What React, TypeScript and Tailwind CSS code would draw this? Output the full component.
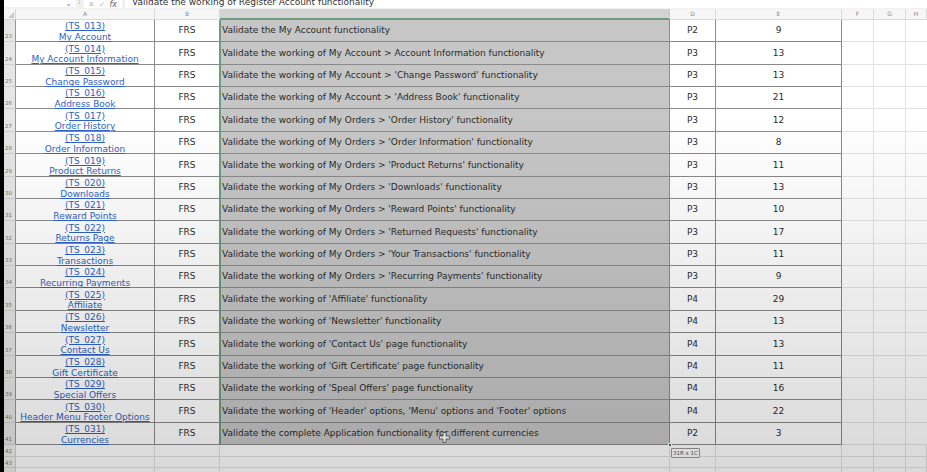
import React from "react";

type Row = { n: number; id: string; name: string; desc: string; pri: string; est: string };

const rows: Row[] = [
  { n: 23, id: "(TS_013)", name: "My Account", desc: "Validate the My Account functionality", pri: "P2", est: "9" },
  { n: 24, id: "(TS_014)", name: "My Account Information", desc: "Validate the working of My Account > Account Information functionality", pri: "P3", est: "13" },
  { n: 25, id: "(TS_015)", name: "Change Password", desc: "Validate the working of My Account > 'Change Password' functionality", pri: "P3", est: "13" },
  { n: 26, id: "(TS_016)", name: "Address Book", desc: "Validate the working of My Account > 'Address Book' functionality", pri: "P3", est: "21" },
  { n: 27, id: "(TS_017)", name: "Order History", desc: "Validate the working of My Orders > 'Order History' functionality", pri: "P3", est: "12" },
  { n: 28, id: "(TS_018)", name: "Order Information", desc: "Validate the working of My Orders > 'Order Information' functionality", pri: "P3", est: "8" },
  { n: 29, id: "(TS_019)", name: "Product Returns", desc: "Validate the working of My Orders > 'Product Returns' functionality", pri: "P3", est: "11" },
  { n: 30, id: "(TS_020)", name: "Downloads", desc: "Validate the working of My Orders > 'Downloads' functionality", pri: "P3", est: "13" },
  { n: 31, id: "(TS_021)", name: "Reward Points", desc: "Validate the working of My Orders > 'Reward Points' functionality", pri: "P3", est: "10" },
  { n: 32, id: "(TS_022)", name: "Returns Page", desc: "Validate the working of My Orders > 'Returned Requests' functionality", pri: "P3", est: "17" },
  { n: 33, id: "(TS_023)", name: "Transactions", desc: "Validate the working of My Orders > 'Your Transactions' functionality", pri: "P3", est: "11" },
  { n: 34, id: "(TS_024)", name: "Recurring Payments", desc: "Validate the working of My Orders > 'Recurring Payments' functionality", pri: "P3", est: "9" },
  { n: 35, id: "(TS_025)", name: "Affiliate", desc: "Validate the working of 'Affiliate' functionality", pri: "P4", est: "29" },
  { n: 36, id: "(TS_026)", name: "Newsletter", desc: "Validate the working of 'Newsletter' functionality", pri: "P4", est: "13" },
  { n: 37, id: "(TS_027)", name: "Contact Us", desc: "Validate the working of 'Contact Us' page functionality", pri: "P4", est: "13" },
  { n: 38, id: "(TS_028)", name: "Gift Certificate", desc: "Validate the working of 'Gift Certificate' page functionality", pri: "P4", est: "11" },
  { n: 39, id: "(TS_029)", name: "Special Offers", desc: "Validate the working of 'Speal Offers' page functionality", pri: "P4", est: "16" },
  { n: 40, id: "(TS_030)", name: "Header Menu Footer Options", desc: "Validate the working of 'Header' options, 'Menu' options and 'Footer' options", pri: "P4", est: "22" },
  { n: 41, id: "(TS_031)", name: "Currencies", desc: "Validate the complete Application functionality for different currencies", pri: "P2", est: "3" },
];

// rows in the capture alternate between 22 and 23px (425px / 19 rows)
const tallRows = [1, 4, 6, 9, 12, 14, 17];

const cols =
  "grid shrink-0 grid-rows-[minmax(0,1fr)] grid-cols-[12px_139px_65px_450px_46px_126px_32px_32px_1fr]";

function FormulaBar() {
  return (
    <div className="h-[9px] shrink-0 bg-[#f1f1f1] flex items-start overflow-hidden">
      <div className="w-[72px] h-[8px] bg-white flex items-end justify-end pr-[4px] text-[#888] text-[8px] leading-none -mt-px">
        <span className="-mb-px">⌄</span>
      </div>
      <div className="w-[6px] text-center text-[#777] text-[7px] leading-none -mt-[2px]">⋮</div>
      <div className="w-[38px] h-[8px] bg-white ml-[2px] flex items-end gap-[4px] pl-[4px] text-[#bbb] text-[8px] leading-none">
        <span className="-mb-px">✕</span>
        <span className="-mb-px">✓</span>
        <span className="italic text-[#666] -mb-px">fx</span>
      </div>
      <div className="flex-1 h-[8px] bg-white ml-[3px] pl-[7px] overflow-hidden">
        <div className="text-[9px] leading-none text-[#333] -mt-[2px] whitespace-nowrap">
          Validate the working of Register Account functionality
        </div>
      </div>
    </div>
  );
}

function HeaderRow() {
  const letters = ["A", "B", "C", "D", "E", "F", "G", "H"];
  return (
    <div className={`${cols} h-[11px] bg-[#f6f6f6] text-[6px] text-[#888] leading-none`}>
      <div className="border-r border-b border-[#d4d4d4] relative">
        <div className="absolute right-[1px] bottom-[1px] w-0 h-0 border-l-[6px] border-l-transparent border-b-[6px] border-b-[#c8c8c8]" />
      </div>
      {letters.map((l) => (
        <div
          key={l}
          className={
            l === "C"
              ? "bg-[#d3d3d3] border-r border-b-2 border-b-[#6f9c80] border-r-[#c8c8c8] flex items-center justify-center"
              : "border-r border-b border-[#d9d9d9] flex items-center justify-center"
          }
        >
          {l === "C" ? "" : l}
        </div>
      ))}
    </div>
  );
}

function DataRow({ r, tall }: { r: Row; tall: boolean }) {
  const cell = "border-r border-b border-[#8a8a8a] flex items-center justify-center text-[#2b2b2b]";
  return (
    <div className={`${cols} ${tall ? "h-[23px]" : "h-[22px]"} text-[9px] leading-none`}>
      <div className="bg-[#e6e6e6] border-r border-r-[#79a58a] border-b border-b-[#cfcfcf] flex items-end pl-[1px] pb-[2px] text-[5.5px] text-[#777]">
        {r.n}
      </div>
      <div className="min-h-0 bg-white border-r border-b border-[#8a8a8a] flex items-center justify-center">
        <div className="translate-y-px flex flex-col items-center text-[#2c63c6] underline leading-[10.5px]">
          <span>{r.id}</span>
          <span className="whitespace-nowrap">{r.name}</span>
        </div>
      </div>
      <div className={`bg-white ${cell}`}>FRS</div>
      <div className="bg-[#c6c6c6] border-l border-l-[#6f9c80] border-r border-r-[#6f9c80] border-b border-b-[#8a8a8a] flex items-center pl-[1px] text-[#2a2a2a] whitespace-nowrap">
        {r.desc}
      </div>
      <div className={`bg-white ${cell}`}>{r.pri}</div>
      <div className={`bg-white ${cell}`}>{r.est}</div>
      <div className="bg-white border-r border-b border-[#e2e2e2]" />
      <div className="bg-white border-r border-b border-[#e2e2e2]" />
      <div className="bg-white border-b border-[#e2e2e2]" />
    </div>
  );
}

function EmptyRow({ n }: { n?: number }) {
  return (
    <div className={`${cols} h-[11.5px]`}>
      <div className="bg-[#efefef] border-r border-b border-[#d4d4d4] flex items-end pl-[1px] pb-[1px] text-[5.5px] leading-none text-[#777]">
        {n}
      </div>
      {Array.from({ length: 8 }).map((_, i) => (
        <div key={i} className="bg-white border-r border-b border-[#e2e2e2]" />
      ))}
    </div>
  );
}

export default function App() {
  return (
    <div className="relative w-[927px] h-[472px] overflow-hidden bg-white flex font-['DejaVu_Sans',Verdana,sans-serif]">
      <div className="w-[4px] bg-black shrink-0" />
      <div className="flex-1 flex flex-col">
        <FormulaBar />
        <HeaderRow />
        {rows.map((r, i) => (
          <DataRow key={r.n} r={r} tall={tallRows.includes(i)} />
        ))}
        <EmptyRow n={42} />
        <EmptyRow n={43} />
        <EmptyRow />
      </div>

      {/* fill handle + size tip */}
      <div className="absolute left-[668px] top-[443px] w-[4px] h-[4px] bg-[#3f7a57] border border-white" />
      <div className="absolute left-[671px] top-[448px] px-[1px] h-[10px] bg-white border border-[#999] rounded-[1px] text-[5.5px] leading-[8px] text-[#555] font-['DejaVu_Sans',sans-serif]">
        31R x 1C
      </div>

      {/* cursor */}
      <svg className="absolute left-[439px] top-[432px]" width="11" height="11" viewBox="0 0 11 11">
        <path d="M4 0.5h3v3.5h3.5v3h-3.5v3.5h-3v-3.5h-3.5v-3h3.5z" fill="#fff" stroke="#555" strokeWidth="0.8" />
      </svg>

      {/* video dimming toward the bottom */}
      <div className="pointer-events-none absolute inset-0 bg-linear-to-b from-transparent from-25% to-black/15" />
    </div>
  );
}
